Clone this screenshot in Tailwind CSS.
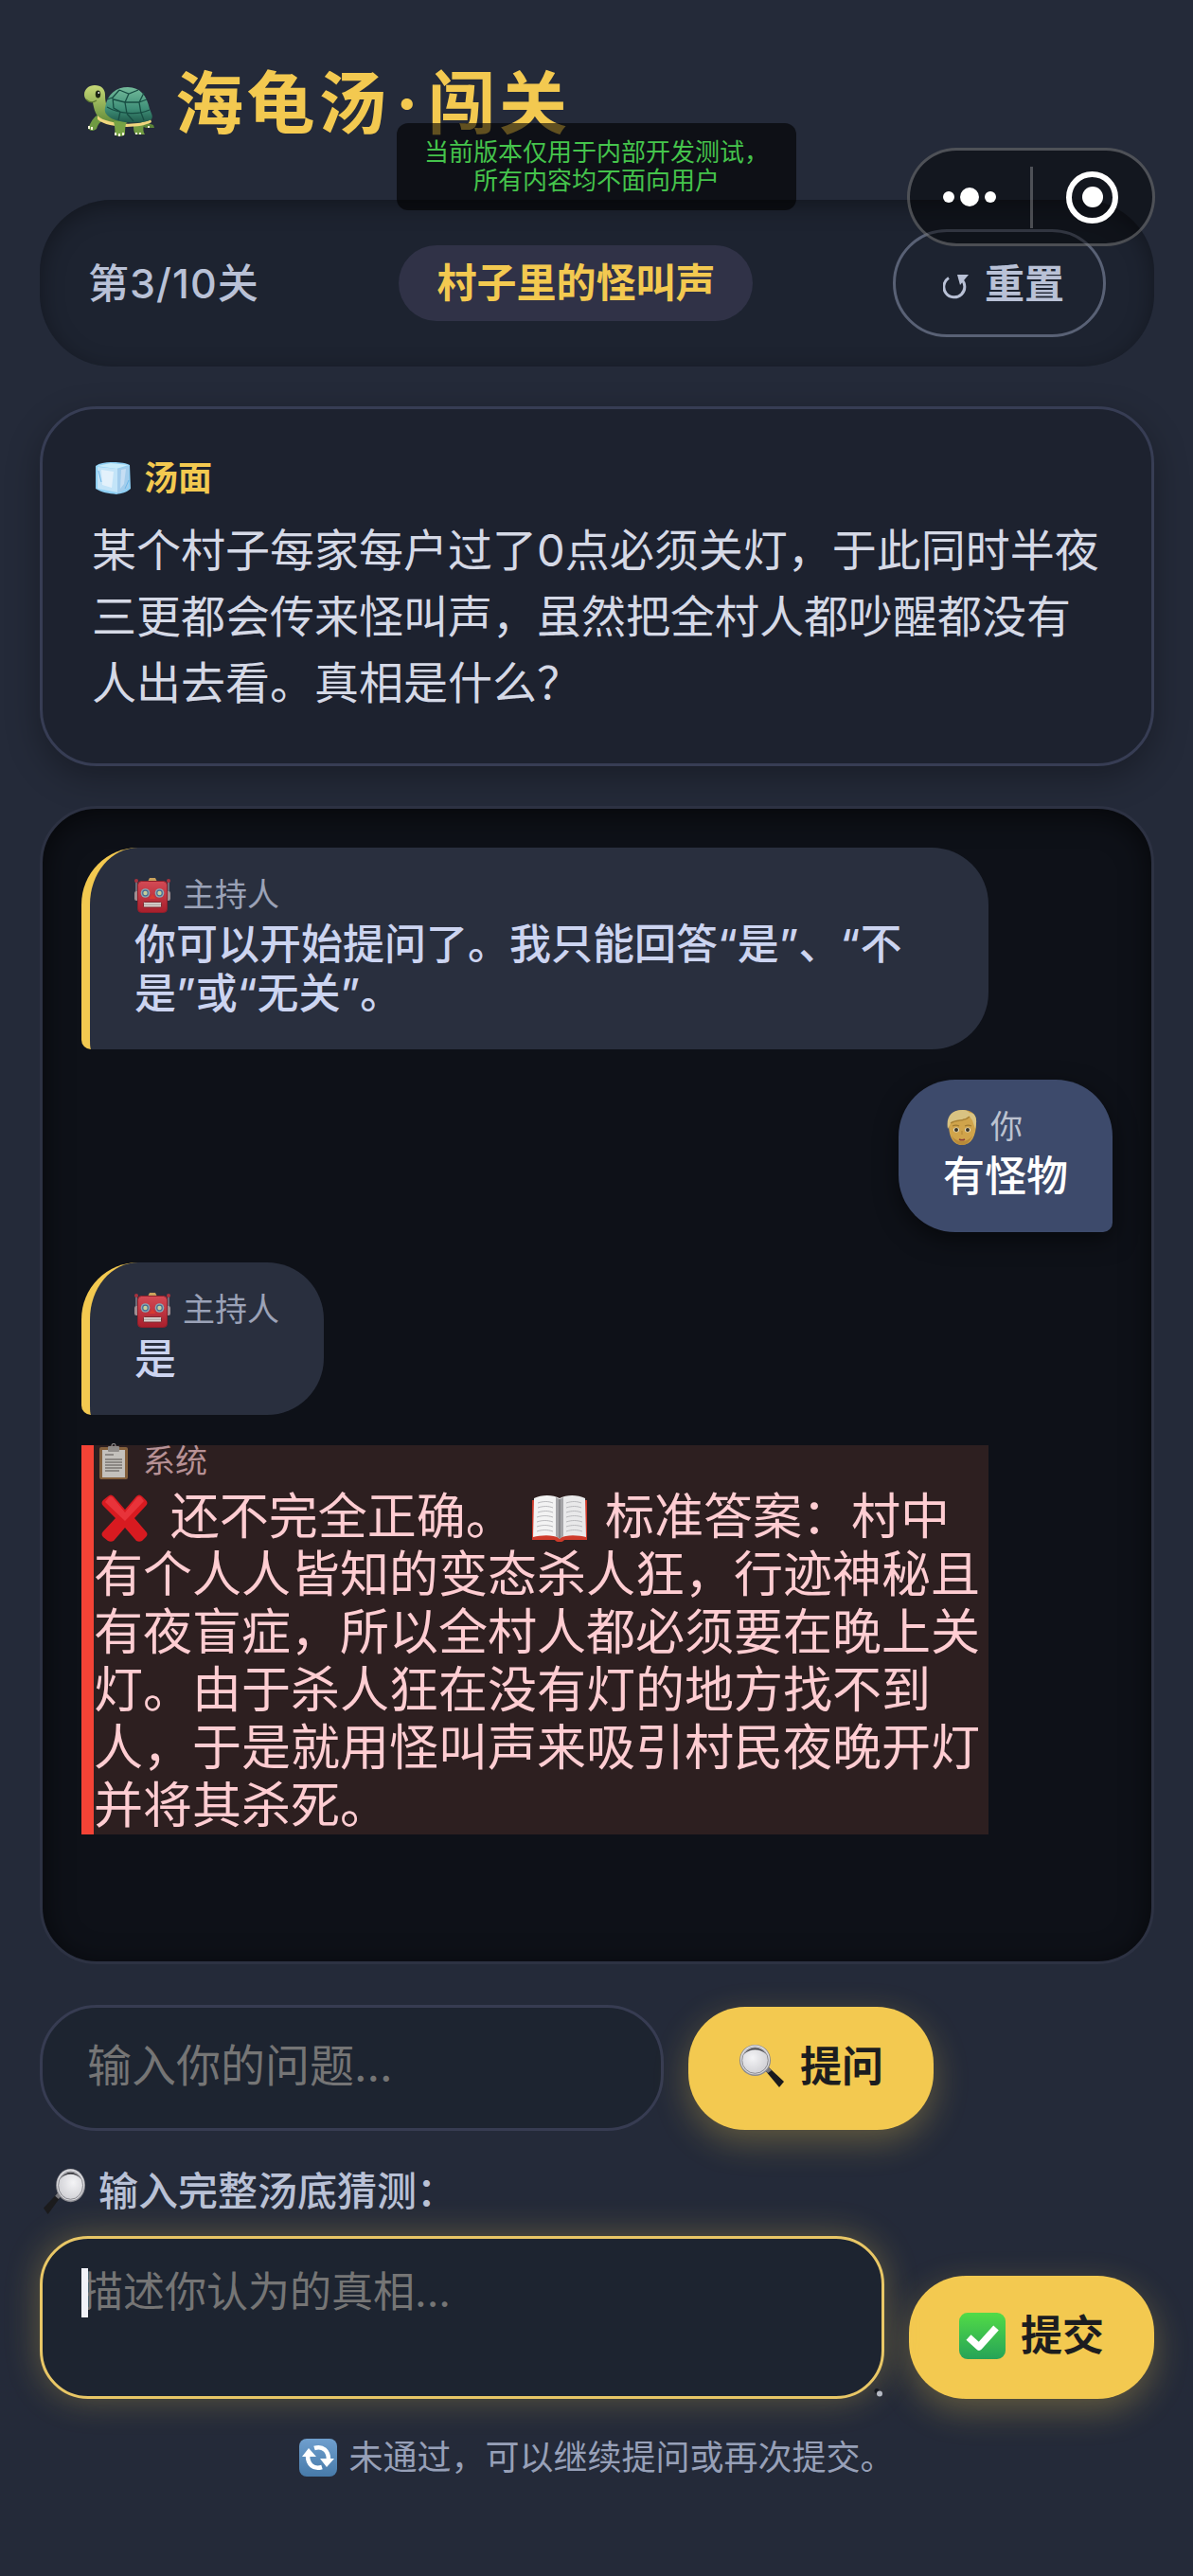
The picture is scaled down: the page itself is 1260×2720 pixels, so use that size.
<!DOCTYPE html>
<html lang="zh-CN">
<head>
    <meta charset="UTF-8">
    <meta name="viewport" content="width=device-width, initial-scale=1.0">
    <title>海龟汤·闯关</title>
    <script src="https://cdn.jsdelivr.net/npm/@tailwindcss/browser@4"></script>
</head>
<body class="relative min-h-screen bg-[#242a39] font-['Inter','Noto_Sans_CJK_SC',sans-serif] text-[#d5d9e6]">

    <!-- shared icons -->
    <svg class="absolute h-0 w-0">
        <defs>
            <linearGradient id="robot-red" x1="0" y1="0" x2="0" y2="1"><stop offset="0" stop-color="#d34a55"/><stop offset="1" stop-color="#a81f2c"/></linearGradient>
            <radialGradient id="lens" cx=".4" cy=".4" r=".7"><stop offset="0" stop-color="#f4f4f6"/><stop offset="1" stop-color="#cdcdd2"/></radialGradient>
            <symbol id="robot" viewBox="0 0 38 38">
                <path d="M2 5v12M36 5v12" stroke="#8d8791" stroke-width="1.4"/>
                <circle cx="2" cy="4" r="2" fill="#a8323e"/><circle cx="36" cy="4" r="2" fill="#a8323e"/>
                <rect x="0" y="15" width="6" height="10" rx="2" fill="#9f8e92"/><rect x="32" y="15" width="6" height="10" rx="2" fill="#9f8e92"/>
                <path d="M14 5l2-4h6l2 4z" fill="#c9a25c"/>
                <rect x="3.500" y="4.500" width="31" height="33" rx="4" fill="url(#robot-red)" stroke="#8e1f2a"/>
                <circle cx="11.500" cy="17" r="4.800" fill="#87a9b5"/><circle cx="26.500" cy="17" r="4.800" fill="#87a9b5"/>
                <circle cx="11.500" cy="17" r="2.800" fill="#c8cf9a" stroke="#4a6a92" stroke-width="1.200"/><circle cx="26.500" cy="17" r="2.800" fill="#c8cf9a" stroke="#4a6a92" stroke-width="1.200"/>
                <path d="M19 18l3.500 5h-7z" fill="#d83a30"/>
                <rect x="9.500" y="26.500" width="19" height="5.500" rx="1" fill="#d8d2cf" stroke="#7d2a30"/>
                <path d="M10 29.200h18" stroke="#9a8c8c" stroke-width=".8"/>
            </symbol>
            <symbol id="magnifier" viewBox="0 0 49 46">
                <path d="M28 27l4-3 16 15-5 6z" fill="#1b1b1d"/>
                <path d="M28 27l4-3 3 3-4 3z" fill="#77777c"/>
                <circle cx="17.500" cy="16.500" r="16.500" fill="#8a8a90"/>
                <circle cx="17.500" cy="16" r="15.500" fill="#d9d9dd"/>
                <circle cx="17.500" cy="16.500" r="13.800" fill="url(#lens)" stroke="#77777d" stroke-width=".8"/>
                <path d="M6 10a13.500 13.500 0 0 1 23 0a15 13 0 0 0-23 0z" fill="#3b3b40"/>
            </symbol>
        </defs>
    </svg>

    <div class="pt-[59px] pr-[41px] pb-12 pl-[42px]">
        <h1 class="mb-[52px] flex items-center gap-[22px] pl-[47px] text-[72px] leading-[100px] font-bold tracking-wider text-[#f3c950]">
            <svg class="mt-4 h-[54px] w-[74px]" viewBox="0 0 74 54">
                <defs>
                    <linearGradient id="shell" x1="0" y1="0" x2="0" y2="1"><stop offset="0" stop-color="#74bb9b"/><stop offset=".6" stop-color="#3f8f78"/><stop offset="1" stop-color="#205a4b"/></linearGradient>
                    <linearGradient id="skin" x1="0" y1="0" x2="0" y2="1"><stop offset="0" stop-color="#c7d877"/><stop offset="1" stop-color="#5f8a38"/></linearGradient>
                </defs>
                <path d="M63 38c3 1 6 3 10 4l1 3h-9c-3-1-5-4-5-6z" fill="#5c8439"/>
                <path d="M52 42h11c-1 4-1 7 1 10h-10c-2-3-2-6-2-10z" fill="#6f9a42"/>
                <path d="M13 32c-5 4-7 9-9 14 3 3 7 2 9 0 1-4 3-7 7-9z" fill="#6f9a42"/>
                <path d="M11 0c7 0 11 4 11 10 0 9 2 15 8 21l18 7c-3 3-20 4-28 0C12 34 10 24 9 18 3 18 0 14 0 10 0 4 5 0 11 0z" fill="url(#skin)"/>
                <path d="M14 32c8 9 42 12 56 4l1 3c-12 7-46 7-57-3z" fill="#f0d67e"/>
                <path d="M31 38h14c-2 5-2 9-2 14-3 3-9 2-11 0 1-5 0-9-1-14z" fill="#76a245"/>
                <path d="M22 24C24 9 34 2 46 2c13 0 20 9 23 23 2 5 4 8 2 11-10 6-36 4-44-2-4-3-6-6-5-10z" fill="url(#shell)"/>
                <path d="M24 23c12 7 32 9 45 3M37 5l-7 8 1 11 7 4M30 13l-6 2M37 5l10 4 10-4M47 9l-4 9 2 12M43 18l-12-3M43 18l15 0 5-10M58 18l2 12M58 18l8-3M38 28l-2 9M45 30l7 8M60 29l3 8" fill="none" stroke="#174d43" stroke-width="1.300"/>
                <ellipse cx="14.500" cy="9.500" rx="2.700" ry="4" fill="#1d2512"/><circle cx="15.300" cy="8" r=".9" fill="#fff"/>
                <path d="M2 15c4 4 8 3 11 1" fill="none" stroke="#5d7931" stroke-width="1.200"/>
                <path d="M5 46v-3M8 47v-3M33 53v-3M37 54v-3M41 53v-3M55 52v-2M59 52v-2M68 45v-2" stroke="#f4f2d6" stroke-width="2"/>
            </svg>
            <span>海龟汤<span class="px-[6px]">·</span>闯关</span>
        </h1>

        <div class="mb-[42px] flex items-center justify-between rounded-[76px] bg-[#1d2330] px-[51px] py-[31px] shadow-[inset_0_6px_24px_rgba(0,0,0,0.35)]">
            <span class="text-[43px] leading-[60px] font-medium tracking-wide text-[#b9c1d6]">第3/10关</span>
            <span class="rounded-full bg-[#303247] px-10 text-[42px] leading-[80px] font-bold text-[#f3c950]">村子里的怪叫声</span>
            <button class="flex h-[114px] items-center gap-[17px] rounded-[57px] border-3 border-[#596175] pr-[41px] pl-[50px] text-[42px] font-bold text-[#b9c1d6]">
                <svg class="mt-2 h-[26px] w-[27px]" viewBox="0 0 27 26">
                    <path d="M6 3.500a11 11 0 1 0 13 1" fill="none" stroke="#b9c1d6" stroke-width="3"/>
                    <path d="M15 0h12l-9 11z" fill="#b9c1d6"/>
                </svg>
                重置
            </button>
        </div>

        <section class="mb-[42px] rounded-[60px] border-3 border-[#373d54] bg-[#1d222f] px-[52px] py-[50px] shadow-[0_12px_36px_rgba(0,0,0,0.3)]">
            <h2 class="mb-[18px] flex items-center gap-[14px] pl-[3px] text-[36px] leading-[46px] font-bold text-[#f3c950]">
                <svg class="h-[34px] w-[38px]" viewBox="0 0 38 34">
                    <path d="M1 4c4-3 10-4 16-4 7 0 14 0 20 3l1 25c-4 4-10 5-15 6-8-1-16-2-22-6z" fill="#8fd0f5"/>
                    <path d="M2 4l15-3 19 2-13 4z" fill="#c9ecfb"/>
                    <path d="M3 5l21 2v25L3 28z" fill="#c3e4f8"/>
                    <path d="M7 8l13 2-2 17-10-3z" fill="#e3f1fb"/>
                    <path d="M24 7l12-3v23l-12 6z" fill="#a3cdec"/>
                    <path d="M28 8l5-1-2 16-4 5z" fill="#c6def3"/>
                    <path d="M4 9l3 12M32 28l4-9" stroke="#6db6e8" fill="none"/>
                </svg>
                汤面
            </h2>
            <p class="text-[47px] leading-[70px]">某个村子每家每户过了0点必须关灯，于此同时半夜三更都会传来怪叫声，虽然把全村人都吵醒都没有人出去看。真相是什么？</p>
        </section>

        <section class="mb-[43px] flex flex-col items-start gap-8 rounded-[60px] border-3 border-[#2d3243] bg-[#0e1118] px-[41px] pt-[41px] pb-[134px] text-[44px] leading-[52px] font-medium text-[#ccd4f0] shadow-[inset_0_6px_30px_rgba(0,0,0,0.6)]">
            <div class="max-w-[88%] rounded-[60px] rounded-bl-[10px] border-l-9 border-[#f3c950] bg-[#292f3e] px-[47px] py-[33px]">
                <div class="mb-[9px] flex h-[34px] items-center gap-[13px] text-[34px] leading-[34px] font-normal text-[#9ba2b7]">
                    <svg class="h-[38px] w-[38px]"><use href="#robot"/></svg>主持人
                </div>
                <p>你可以开始提问了。我只能回答“是”、“不是”或“无关”。</p>
            </div>

            <div class="max-w-[88%] self-end rounded-[60px] rounded-br-[10px] bg-[#3d4a6b] px-[47px] py-[33px] text-white shadow-[0_8px_24px_rgba(0,0,0,0.5)]">
                <div class="mb-[9px] flex h-[34px] items-center gap-[14px] pl-1 text-[34px] leading-[34px] font-normal text-[#bcc2d0]">
                    <svg class="h-[37px] w-8" viewBox="0 0 32 37">
                        <path d="M2 15C1 5 8 0 17 0c9 0 15 5 14 14 0 13-5 23-15 23S2 27 2 15z" fill="#d0a44b"/>
                        <path d="M5 27c5 8 17 8 22 0-2 6-6 10-11 10S7 33 5 27z" fill="#b88a39"/>
                        <path d="M1 20C-1 8 4 0 17 0c3 0 5 1 7 3 8 0 8 9 6 17l-3-9-3-4c-6 6-14 3-20 7z" fill="#d9c382"/>
                        <path d="M4 14c7-5 14-1 20-7" fill="none" stroke="#a98235" stroke-width="1.500"/>
                        <ellipse cx="10" cy="21" rx="3" ry="2.500" fill="#e6dfc8"/><ellipse cx="22" cy="21" rx="3" ry="2.500" fill="#e6dfc8"/>
                        <circle cx="10" cy="21" r="2" fill="#3a3424"/><circle cx="22" cy="21" r="2" fill="#3a3424"/>
                        <path d="M6 17c2-1 5-1 7 0M19 17c2-1 5-1 7 0" stroke="#a07a30" fill="none" stroke-width="1.200"/>
                        <path d="M13 31c2 1 4 1 6 0" stroke="#8d3f35" fill="none" stroke-width="1.600"/>
                        <path d="M16 22v4" stroke="#b18437"/>
                    </svg>你
                </div>
                <p>有怪物</p>
            </div>

            <div class="max-w-[88%] rounded-[60px] rounded-bl-[10px] border-l-9 border-[#f3c950] bg-[#292f3e] px-[47px] py-[33px]">
                <div class="mb-[9px] flex h-[34px] items-center gap-[13px] text-[34px] leading-[34px] font-normal text-[#9ba2b7]">
                    <svg class="h-[38px] w-[38px]"><use href="#robot"/></svg>主持人
                </div>
                <p>是</p>
            </div>

            <div class="w-[88%] border-l-13 border-[#f44336] bg-[#2d1f20] font-normal text-[#ffcdd2]">
                <div class="mb-[11px] flex h-[34px] items-center gap-4 pl-[6px] text-[34px] leading-[34px] text-[#b79195]">
                    <svg class="h-[38px] w-[30px]" viewBox="0 0 30 38">
                        <rect y="4" width="30" height="34" rx="2" fill="#84603c"/>
                        <rect x="3" y="7" width="24" height="29" fill="#c4c1bc"/>
                        <rect x="9" y="3" width="12" height="6" rx="1" fill="#908c89"/>
                        <circle cx="15" cy="2.500" r="2" fill="none" stroke="#8d8988" stroke-width="1.200"/>
                        <path d="M6 12h9M6 17h18M6 20h18M6 23h18M6 26h18M6 29h15" stroke="#55504d" stroke-width="1.200"/>
                    </svg>系统
                </div>
                <p class="text-[52px] leading-[61px]"><svg class="inline-block h-[50px] w-[66px] align-[-8px]" viewBox="0 0 66 50">
                        <path d="M15 2c2-2 4-2 6 0l12 14L45 2c2-2 4-2 6 0l4 4c2 2 2 4 0 6L43 25l12 14c2 2 2 4 0 6l-4 4c-2 1-4 1-6 0L33 35 21 49c-2 1-4 1-6 0l-5-4c-2-2-2-4 0-6l13-14-13-13c-2-2-2-4 0-6z" fill="#d81a20"/>
                        <path d="M16 3c1-1 3-1 4 0l13 16L46 3c1-1 3-1 4 0l3 4-20 21L12 8z" fill="#e8333a"/>
                    </svg> 还不完全正确。 <svg class="inline-block h-[50px] w-[66px] align-[-8px]" viewBox="0 0 66 50">
                        <path d="M4 6l58 0v42H38c-2 3-8 3-10 0H4z" fill="#cf3a2a"/>
                        <path d="M6 4C14 0 26 0 33 4v42c-8-4-20-3-28-1z" fill="#f3f3f3"/>
                        <path d="M60 4C52 0 40 0 33 4v42c8-4 20-3 28-1z" fill="#e9e9ea"/>
                        <path d="M29 3l4 2 4-2v41l-4 3-4-3z" fill="#a5a5a8"/><path d="M33 5v41" stroke="#6c6c70"/>
                        <path d="M10 9c6-2 11-2 16 0M10 14c6-2 11-2 16 0M10 19c6-2 11-2 16 0M9 24c6-2 11-2 17 0M9 29c6-2 11-2 17 0M9 34c6-2 11-2 17 0M9 39c6-2 11-2 17 0M40 9c6-2 11-2 16 0M40 14c6-2 11-2 16 0M40 19c6-2 11-2 16 0M40 24c6-2 11-2 17 0M40 29c6-2 11-2 17 0M40 34c6-2 11-2 17 0M40 39c6-2 11-2 17 0" fill="none" stroke="#b9b9bc"/>
                    </svg> 标准答案：村中有个人人皆知的变态杀人狂，行迹神秘且有夜盲症，所以全村人都必须要在晚上关灯。由于杀人狂在没有灯的地方找不到人，于是就用怪叫声来吸引村民夜晚开灯并将其杀死。</p>
            </div>
        </section>

        <div class="mb-[35px] flex items-center gap-[26px]">
            <input type="text" aria-label="输入你的问题" placeholder="输入你的问题..." class="h-[133px] w-[56%] rounded-[60px] border-3 border-[#373c52] bg-[#1d2430] px-[47px] pb-[6px] text-[47px] outline-none placeholder:text-[#757575]">
            <button class="flex h-[130px] items-center gap-4 rounded-[60px] bg-[#f3c950] px-[53px] pb-1 text-[44px] font-bold text-[#1c1d20] shadow-[0_12px_36px_rgba(243,201,80,0.3)]">
                <svg class="h-[46px] w-[49px]"><use href="#magnifier"/></svg>提问
            </button>
        </div>

        <label for="guess" class="mb-[18px] flex items-center gap-[13px] pl-[3px] text-[42px] leading-[58px] font-medium text-[#b9c1d6]">
            <svg class="h-[49px] w-[46px] -scale-x-100" viewBox="0 0 49 46" preserveAspectRatio="none"><use href="#magnifier" width="49" height="46"/></svg>输入完整汤底猜测：
        </label>
        <div class="mb-[36px] flex items-end gap-[26px]">
            <div class="relative flex-1">
                <textarea id="guess" placeholder="描述你认为的真相..." class="block h-[172px] w-full resize-none rounded-[51px] border-3 border-[#e9c766] bg-[#1d2430] px-[41px] py-[30px] text-[44px] leading-[52px] caret-transparent shadow-[0_0_36px_rgba(243,201,80,0.3)] outline-none placeholder:text-[#757575]"></textarea>
                <span class="absolute top-[34px] left-[44px] h-[52px] w-[7px] bg-[#f1f2f8]"></span>
                <svg class="absolute right-[2px] bottom-[2px] h-[9px] w-[9px]" viewBox="0 0 9 9"><circle cx="3" cy="2.500" r="2.500" fill="#15181f"/><circle cx="6" cy="5.500" r="3" fill="#b6bac4"/></svg>
            </div>
            <button class="flex h-[130px] items-center gap-4 rounded-[60px] bg-[#f3c950] px-[53px] pb-1 text-[44px] font-bold text-[#1c1d20] shadow-[0_12px_36px_rgba(243,201,80,0.3)]">
                <svg class="h-[49px] w-[49px]" viewBox="0 0 49 49">
                    <defs><linearGradient id="ok" x1="0" y1="0" x2="0" y2="1"><stop offset="0" stop-color="#52db47"/><stop offset="1" stop-color="#26a357"/></linearGradient></defs>
                    <rect width="49" height="49" rx="9" fill="url(#ok)"/>
                    <path d="M10 26l11 10 18-20" fill="none" stroke="#fff" stroke-width="7.500" stroke-linejoin="round"/>
                </svg>提交
            </button>
        </div>

        <p class="flex items-center justify-center gap-3 text-[36px] leading-[52px] text-[#97a0b8]">
            <svg class="h-[40px] w-[40px]" viewBox="0 0 40 40">
                <defs><linearGradient id="again" x1="0" y1="0" x2="0" y2="1"><stop offset="0" stop-color="#6f9fce"/><stop offset="1" stop-color="#477aa9"/></linearGradient></defs>
                <rect width="40" height="40" rx="8" fill="url(#again)"/>
                <path d="M16 10c9-3 15 3 15 12M24 30c-9 3-15-3-15-12" fill="none" stroke="#fff" stroke-width="4.500"/>
                <path d="M22 21h15l-8 9zM3 19h15l-8-9z" fill="#fff"/>
            </svg>未通过，可以继续提问或再次提交。
        </p>
    </div>

    <!-- test build notice -->
    <div class="absolute top-[130px] left-1/2 w-[422px] -translate-x-1/2 rounded-xl bg-black/60 py-4 text-center text-[26px] leading-[30px] text-[#45c44c]">
        当前版本仅用于内部开发测试，<br>所有内容均不面向用户
    </div>

    <!-- mini program capsule -->
    <div class="absolute top-[156px] right-10 flex h-[104px] w-[262px] items-center rounded-full border-3 border-white/25 bg-black/45">
        <button aria-label="更多" class="flex flex-1 items-center justify-center gap-[6px]">
            <span class="size-3 rounded-full bg-white"></span>
            <span class="size-5 rounded-full bg-white"></span>
            <span class="size-3 rounded-full bg-white"></span>
        </button>
        <span class="h-[65px] w-[3px] bg-white/25"></span>
        <button aria-label="关闭" class="flex flex-1 items-center justify-center">
            <span class="flex size-[55px] items-center justify-center rounded-full border-6 border-white">
                <span class="size-[22px] rounded-full bg-white"></span>
            </span>
        </button>
    </div>
</body>
</html>
